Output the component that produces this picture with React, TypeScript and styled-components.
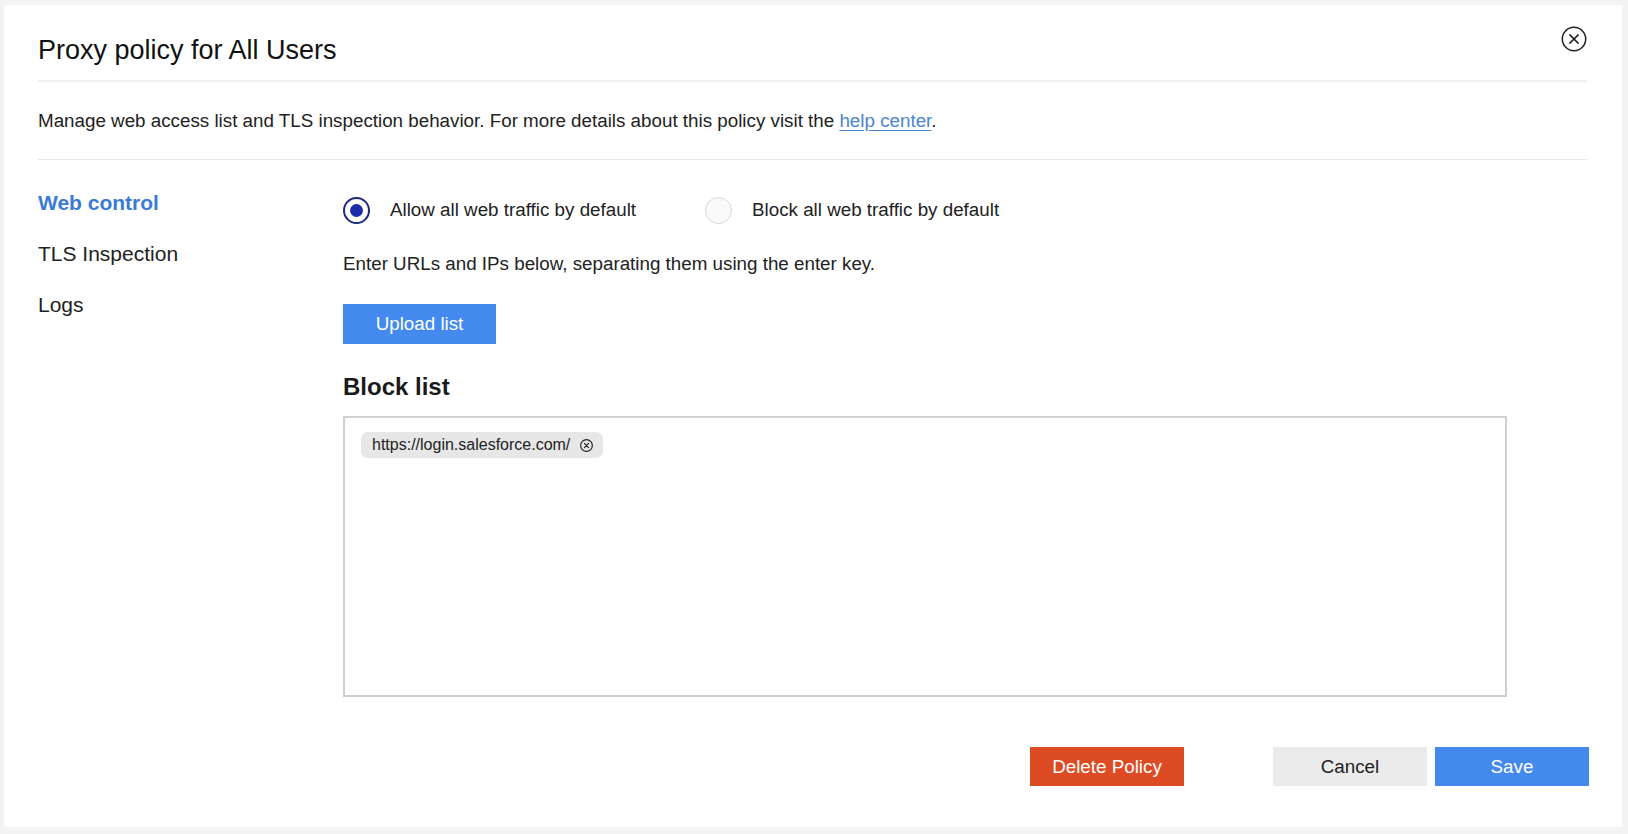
import styled, { createGlobalStyle } from 'styled-components'

const GlobalStyle = createGlobalStyle`
  html, body {
    margin: 0;
    padding: 0;
    background: #f3f3f3;
    font-family: "Liberation Sans", Arial, Helvetica, sans-serif;
    color: #222;
  }
  * {
    box-sizing: border-box;
  }
`

const Page = styled.div`
  padding: 5px 6px 7px 4px;
`

const Card = styled.div`
  background: #fff;
  height: 822px;
  padding: 0 35px 41px 34px;
  display: flex;
  flex-direction: column;
`

const Header = styled.header`
  display: flex;
  justify-content: space-between;
  align-items: flex-start;
  padding-top: 29px;
  padding-bottom: 14px;
  border-bottom: 2px solid #efefef;
`

const Title = styled.h1`
  margin: 0;
  font-size: 27px;
  line-height: 32px;
  font-weight: 400;
  color: #111;
`

const CloseButton = styled.button`
  border: none;
  background: none;
  padding: 0;
  margin-top: -8px;
  width: 26px;
  height: 26px;
  cursor: pointer;
  display: flex;
`

const Description = styled.p`
  margin: 0;
  padding: 27px 0 26px;
  font-size: 18.8px;
  line-height: 24px;
  border-bottom: 1px solid #e8e8e8;
`

const HelpLink = styled.a`
  color: #4a86cf;
  text-decoration: underline;
  text-underline-offset: 3px;
`

const Body = styled.div`
  display: flex;
  flex: 1;
`

const Sidebar = styled.nav`
  width: 305px;
  padding-top: 17px;
  display: flex;
  flex-direction: column;
`

const NavItem = styled.a<{ $active?: boolean }>`
  font-size: 21px;
  line-height: 51px;
  font-weight: ${(p) => (p.$active ? 700 : 400)};
  color: ${(p) => (p.$active ? '#3b7bd4' : '#222')};
  text-decoration: none;
  cursor: pointer;
`

const Content = styled.section`
  flex: 1;
  padding-top: 36px;
  display: flex;
  flex-direction: column;
`

const RadioRow = styled.div`
  display: flex;
  align-items: center;
  gap: 69px;
  height: 28px;
`

const RadioLabel = styled.label`
  display: flex;
  align-items: center;
  gap: 20px;
  font-size: 18.8px;
  cursor: pointer;
`

const RadioCircle = styled.span<{ $checked?: boolean }>`
  width: 27px;
  height: 27px;
  border-radius: 50%;
  border: ${(p) => (p.$checked ? '2px solid #1c2a7a' : '1px solid #d8d8d8')};
  background: ${(p) => (p.$checked ? '#fff' : '#fafafa')};
  display: flex;
  align-items: center;
  justify-content: center;

  &::after {
    content: '';
    display: ${(p) => (p.$checked ? 'block' : 'none')};
    width: 13px;
    height: 13px;
    border-radius: 50%;
    background: #1a2eaa;
  }
`

const Hint = styled.p`
  margin: 28px 0 0;
  font-size: 18.8px;
  line-height: 24px;
`

const Button = styled.button<{ $variant: 'primary' | 'danger' | 'neutral' }>`
  width: 154px;
  height: 39px;
  border: none;
  font-family: inherit;
  font-size: 18.8px;
  cursor: pointer;
  background: ${(p) =>
    p.$variant === 'primary' ? '#4489ed' : p.$variant === 'danger' ? '#dd4b24' : '#ebebeb'};
  color: ${(p) => (p.$variant === 'neutral' ? '#222' : '#fff')};
`

const UploadButton = styled(Button)`
  margin-top: 28px;
  width: 153px;
  height: 40px;
`

const SectionTitle = styled.h2`
  margin: 29px 0 0;
  font-size: 24px;
  line-height: 28px;
  font-weight: 700;
  color: #1a1a1a;
`

const ListBox = styled.div`
  margin-top: 15px;
  width: 1164px;
  height: 281px;
  border: 2px solid #cfcfcf;
  padding: 14px 16px;
  display: flex;
  flex-wrap: wrap;
  align-content: flex-start;
  gap: 8px;
`

const Chip = styled.span`
  display: inline-flex;
  align-items: center;
  gap: 10px;
  height: 26px;
  padding: 0 10px 0 11px;
  border-radius: 7px;
  background: #e7e7e7;
  font-size: 16px;
  color: #222;
`

const ChipRemove = styled.button`
  border: none;
  background: none;
  padding: 0;
  width: 13px;
  height: 13px;
  display: flex;
  cursor: pointer;
`

const Footer = styled.footer`
  margin-top: auto;
  margin-right: -2px;
  display: flex;
  justify-content: flex-end;
  gap: 8px;
`

const DeleteButton = styled(Button)`
  margin-right: 81px;
`

const CircleX = ({ size, stroke }: { size: number; stroke: number }) => (
  <svg width={size} height={size} viewBox="0 0 24 24" fill="none" stroke="#222" strokeWidth={stroke}>
    <circle cx="12" cy="12" r="10.8" />
    <path d="M8.2 8.2l7.6 7.6M15.8 8.2l-7.6 7.6" strokeLinecap="round" />
  </svg>
)

const App = () => {
  return (
    <>
      <GlobalStyle />
      <Page>
        <Card>
          <Header>
            <Title>Proxy policy for All Users</Title>
            <CloseButton aria-label="Close">
              <CircleX size={26} stroke={1.4} />
            </CloseButton>
          </Header>
          <Description>
            Manage web access list and TLS inspection behavior. For more details about this policy
            visit the <HelpLink href="#">help center</HelpLink>.
          </Description>
          <Body>
            <Sidebar>
              <NavItem $active>Web control</NavItem>
              <NavItem>TLS Inspection</NavItem>
              <NavItem>Logs</NavItem>
            </Sidebar>
            <Content>
              <RadioRow>
                <RadioLabel>
                  <RadioCircle $checked />
                  Allow all web traffic by default
                </RadioLabel>
                <RadioLabel>
                  <RadioCircle />
                  Block all web traffic by default
                </RadioLabel>
              </RadioRow>
              <Hint>Enter URLs and IPs below, separating them using the enter key.</Hint>
              <div>
                <UploadButton $variant="primary">Upload list</UploadButton>
              </div>
              <SectionTitle>Block list</SectionTitle>
              <ListBox>
                <Chip>
                  https://login.salesforce.com/
                  <ChipRemove aria-label="Remove">
                    <CircleX size={13} stroke={2.2} />
                  </ChipRemove>
                </Chip>
              </ListBox>
              <Footer>
                <DeleteButton $variant="danger">Delete Policy</DeleteButton>
                <Button $variant="neutral">Cancel</Button>
                <Button $variant="primary">Save</Button>
              </Footer>
            </Content>
          </Body>
        </Card>
      </Page>
    </>
  )
}

export default App
